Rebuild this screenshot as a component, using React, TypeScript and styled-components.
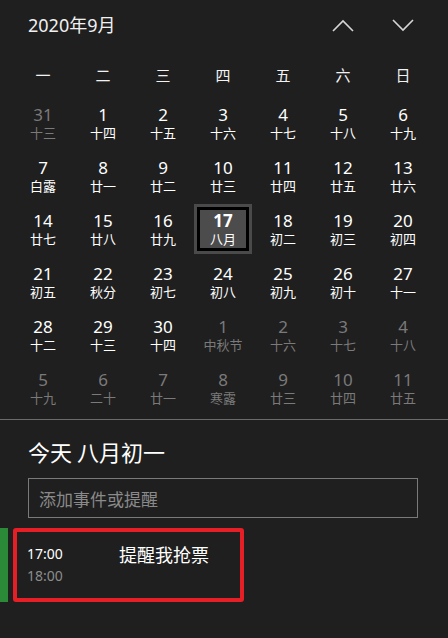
import React from "react";
import styled, { createGlobalStyle } from "styled-components";

const Global = createGlobalStyle`
  html, body { margin: 0; padding: 0; background: #1f1f1f; }
  * { box-sizing: border-box; }
`;

const FONT = `"Segoe UI", "Noto Sans", "Noto Sans CJK SC", sans-serif`;

const Page = styled.div`
  width: 448px;
  height: 638px;
  background: #1f1f1f;
  color: #fff;
  font-family: ${FONT};
  display: flex;
  flex-direction: column;
  overflow: hidden;
`;

const Header = styled.div`
  height: 50px;
  display: flex;
  align-items: center;
  padding: 0 15px 0 28px;
`;

const MonthTitle = styled.div`
  flex: 1;
  font-size: 18px;
  color: #f0f0f0;
  line-height: 24px;
`;

const NavButton = styled.button`
  width: 60px;
  height: 40px;
  display: flex;
  align-items: center;
  justify-content: center;
  background: transparent;
  border: none;
  padding: 0;
  color: #d6d6d6;
`;

const Grid = styled.div`
  display: grid;
  grid-template-columns: repeat(7, 60px);
  padding: 0 15px 0 13px;
`;

const WeekRow = styled(Grid)`
  height: 47px;
  align-items: center;
  padding-top: 2px;
`;

const WeekDay = styled.div`
  text-align: center;
  font-size: 15px;
  color: #f2f2f2;
  font-family: "Noto Sans CJK SC", sans-serif;
`;

const DaysGrid = styled(Grid)`
  grid-auto-rows: 53px;
`;

const DayCell = styled.div<{ $muted?: boolean; $today?: boolean }>`
  width: 58px;
  height: 50px;
  margin: 1px 1px 2px 1px;
  display: flex;
  flex-direction: column;
  align-items: center;
  justify-content: center;
  color: ${(p) => (p.$muted ? "#7a7a7a" : "#ffffff")};
  background: ${(p) => (p.$today ? "#4c4c4c" : "transparent")};
  box-shadow: ${(p) =>
    p.$today ? "inset 0 0 0 3px #4a4a4a, inset 0 0 0 6px #000" : "none"};
`;

const DayNum = styled.div<{ $bold?: boolean }>`
  font-size: 17px;
  line-height: 19px;
  font-weight: ${(p) => (p.$bold ? 700 : 400)};
`;

const Lunar = styled.div`
  font-size: 13px;
  line-height: 17px;
  font-family: "Noto Sans CJK SC", sans-serif;
`;

const Divider = styled.div`
  height: 1px;
  background: #6b6b6b;
  margin-top: 4px;
`;

const Agenda = styled.div`
  padding: 16px 30px 0 28px;
`;

const TodayTitle = styled.div`
  font-size: 22px;
  line-height: 30px;
  color: #fff;
  font-family: "Noto Sans CJK SC", sans-serif;
`;

const AddInput = styled.div`
  margin-top: 12px;
  width: 390px;
  height: 40px;
  border: 1px solid #7a7a7a;
  display: flex;
  align-items: center;
  padding-left: 10px;
  font-size: 17px;
  color: #8a8a8a;
  font-family: "Noto Sans CJK SC", sans-serif;
`;

const EventRow = styled.div`
  margin-top: 10px;
  display: flex;
  gap: 5px;
  height: 74px;
`;

const ColorBar = styled.div`
  width: 8px;
  background: #2b8a38;
`;

const EventCard = styled.div`
  width: 231px;
  border: 4px solid #e61e26;
  border-radius: 3px;
  display: flex;
  padding: 10px 0 0 10px;
`;

const Times = styled.div`
  width: 92px;
  margin-top: 1px;
  display: flex;
  flex-direction: column;
`;

const Time = styled.div<{ $dim?: boolean }>`
  font-size: 14px;
  line-height: 22px;
  color: ${(p) => (p.$dim ? "#8c8c8c" : "#ffffff")};
`;

const EventTitle = styled.div`
  font-size: 18px;
  line-height: 24px;
  color: #fff;
  font-family: "Noto Sans CJK SC", sans-serif;
`;

const Chevron = ({ up }: { up?: boolean }) => (
  <svg width="22" height="13" viewBox="0 0 22 13" fill="none">
    <polyline
      points={up ? "1,12 11,2 21,12" : "1,1 11,11 21,1"}
      stroke="currentColor"
      strokeWidth="1.6"
    />
  </svg>
);

type Day = { n: number; l: string; m?: boolean; t?: boolean };

const rows: Day[][] = [
  [
    { n: 31, l: "十三", m: true },
    { n: 1, l: "十四" },
    { n: 2, l: "十五" },
    { n: 3, l: "十六" },
    { n: 4, l: "十七" },
    { n: 5, l: "十八" },
    { n: 6, l: "十九" },
  ],
  [
    { n: 7, l: "白露" },
    { n: 8, l: "廿一" },
    { n: 9, l: "廿二" },
    { n: 10, l: "廿三" },
    { n: 11, l: "廿四" },
    { n: 12, l: "廿五" },
    { n: 13, l: "廿六" },
  ],
  [
    { n: 14, l: "廿七" },
    { n: 15, l: "廿八" },
    { n: 16, l: "廿九" },
    { n: 17, l: "八月", t: true },
    { n: 18, l: "初二" },
    { n: 19, l: "初三" },
    { n: 20, l: "初四" },
  ],
  [
    { n: 21, l: "初五" },
    { n: 22, l: "秋分" },
    { n: 23, l: "初七" },
    { n: 24, l: "初八" },
    { n: 25, l: "初九" },
    { n: 26, l: "初十" },
    { n: 27, l: "十一" },
  ],
  [
    { n: 28, l: "十二" },
    { n: 29, l: "十三" },
    { n: 30, l: "十四" },
    { n: 1, l: "中秋节", m: true },
    { n: 2, l: "十六", m: true },
    { n: 3, l: "十七", m: true },
    { n: 4, l: "十八", m: true },
  ],
  [
    { n: 5, l: "十九", m: true },
    { n: 6, l: "二十", m: true },
    { n: 7, l: "廿一", m: true },
    { n: 8, l: "寒露", m: true },
    { n: 9, l: "廿三", m: true },
    { n: 10, l: "廿四", m: true },
    { n: 11, l: "廿五", m: true },
  ],
];

const weekdays = ["一", "二", "三", "四", "五", "六", "日"];

export default function App() {
  return (
    <Page>
      <Global />
      <Header>
        <MonthTitle>2020年9月</MonthTitle>
        <NavButton aria-label="上一月">
          <Chevron up />
        </NavButton>
        <NavButton aria-label="下一月">
          <Chevron />
        </NavButton>
      </Header>
      <WeekRow>
        {weekdays.map((w) => (
          <WeekDay key={w}>{w}</WeekDay>
        ))}
      </WeekRow>
      <DaysGrid>
        {rows.flat().map((d, i) => (
          <DayCell key={i} $muted={d.m} $today={d.t}>
            <DayNum $bold={d.t}>{d.n}</DayNum>
            <Lunar>{d.l}</Lunar>
          </DayCell>
        ))}
      </DaysGrid>
      <Divider />
      <Agenda>
        <TodayTitle>今天 八月初一</TodayTitle>
        <AddInput>添加事件或提醒</AddInput>
      </Agenda>
      <EventRow>
        <ColorBar />
        <EventCard>
          <Times>
            <Time>17:00</Time>
            <Time $dim>18:00</Time>
          </Times>
          <EventTitle>提醒我抢票</EventTitle>
        </EventCard>
      </EventRow>
    </Page>
  );
}
